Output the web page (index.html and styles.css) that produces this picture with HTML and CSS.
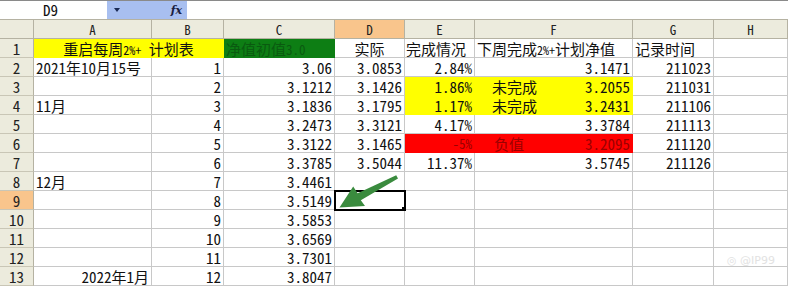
FILE: index.html
```html
<!DOCTYPE html>
<html>
<head>
<meta charset="utf-8">
<link rel="stylesheet" href="styles.css">
</head>
<body>
<div class="app">
  <div class="fbar">
    <div class="namebox">D9</div>
    <div class="fbtn"><span class="dd"></span><span class="fx">fx</span></div>
    <div class="finput"></div>
  </div>
  <div class="sheet">
    <div class="c hd corner"></div>
    <div class="c hd">A</div><div class="c hd">B</div><div class="c hd">C</div><div class="c hd sel">D</div><div class="c hd">E</div><div class="c hd">F</div><div class="c hd">G</div><div class="c hd">H</div>

    <div class="c rh">1</div>
    <div class="c yel span2 ctr">重启每周<span class="sm">2%+</span> 计划表</div>
    <div class="c grn">净值初值<span class="md">3.0</span></div>
    <div class="c ctr">实际</div>
    <div class="c tight">完成情况</div>
    <div class="c">下周完成<span class="sm">2%+</span>计划净值</div>
    <div class="c">记录时间</div>
    <div class="c"></div>

    <div class="c rh">2</div>
    <div class="c">2021年10月15号</div><div class="c r">1</div><div class="c r">3.06</div><div class="c r">3.0853</div><div class="c r">2.84%</div><div class="c r">3.1471</div><div class="c r">211023</div><div class="c"></div>

    <div class="c rh">3</div>
    <div class="c"></div><div class="c r">2</div><div class="c r">3.1212</div><div class="c r">3.1426</div><div class="c r yel">1.86%</div><div class="c yel split"><span>未完成</span><span>3.2055</span></div><div class="c r">211031</div><div class="c"></div>

    <div class="c rh">4</div>
    <div class="c">11月</div><div class="c r">3</div><div class="c r">3.1836</div><div class="c r">3.1795</div><div class="c r yel">1.17%</div><div class="c yel split"><span>未完成</span><span>3.2431</span></div><div class="c r">211106</div><div class="c"></div>

    <div class="c rh">5</div>
    <div class="c"></div><div class="c r">4</div><div class="c r">3.2473</div><div class="c r">3.3121</div><div class="c r">4.17%</div><div class="c r">3.3784</div><div class="c r">211113</div><div class="c"></div>

    <div class="c rh">6</div>
    <div class="c"></div><div class="c r">5</div><div class="c r">3.3122</div><div class="c r">3.1465</div><div class="c r red smcell">-5%</div><div class="c red split neg"><span>负值</span><span>3.2095</span></div><div class="c r">211120</div><div class="c"></div>

    <div class="c rh">7</div>
    <div class="c"></div><div class="c r">6</div><div class="c r">3.3785</div><div class="c r">3.5044</div><div class="c r">11.37%</div><div class="c r">3.5745</div><div class="c r">211126</div><div class="c"></div>

    <div class="c rh">8</div>
    <div class="c">12月</div><div class="c r">7</div><div class="c r">3.4461</div><div class="c"></div><div class="c"></div><div class="c"></div><div class="c"></div><div class="c"></div>

    <div class="c rh sel">9</div>
    <div class="c"></div><div class="c r">8</div><div class="c r">3.5149</div><div class="c active"></div><div class="c"></div><div class="c"></div><div class="c"></div><div class="c"></div>

    <div class="c rh">10</div>
    <div class="c"></div><div class="c r">9</div><div class="c r">3.5853</div><div class="c"></div><div class="c"></div><div class="c"></div><div class="c"></div><div class="c"></div>

    <div class="c rh">11</div>
    <div class="c"></div><div class="c r">10</div><div class="c r">3.6569</div><div class="c"></div><div class="c"></div><div class="c"></div><div class="c"></div><div class="c"></div>

    <div class="c rh">12</div>
    <div class="c"></div><div class="c r">11</div><div class="c r">3.7301</div><div class="c"></div><div class="c"></div><div class="c"></div><div class="c"></div><div class="c"></div>

    <div class="c rh">13</div>
    <div class="c r">2022年1月</div><div class="c r">12</div><div class="c r">3.8047</div><div class="c"></div><div class="c"></div><div class="c"></div><div class="c"></div><div class="c"></div>
  </div>
  <svg class="arrow" width="788" height="288" viewBox="0 0 788 288">
    <polygon points="396.2,175.2 357.6,193.2 353.2,186.6 339.5,207.5 365,206 360.8,200.2 398,178.6" fill="#3a8b3e"/>
  </svg>
  <div class="wm">◎ @IP99</div>
</div>
</body>
</html>
```
FILE: styles.css
```css
html, body {
  margin: 0;
  padding: 0;
  background: #ffffff;
}
.app {
  position: relative;
  width: 788px;
  height: 288px;
  overflow: hidden;
  font-family: "Noto Sans Mono CJK SC", "Noto Sans CJK SC", monospace;
  font-size: 15px;
  color: #111;
}
.fbar {
  display: flex;
  height: 19px;
  border-top: 1px solid #8a8a8a;
  box-sizing: border-box;
  background: #fff;
}
.namebox {
  width: 107px;
  padding-left: 43px;
  box-sizing: border-box;
  line-height: 18px;
  font-size: 15px;
}
.fbtn {
  width: 80px;
  background: #a8bff0;
  display: flex;
  align-items: center;
  justify-content: space-between;
  padding: 0 5px 0 7px;
  box-sizing: border-box;
}
.dd {
  width: 0;
  height: 0;
  border-left: 3px solid transparent;
  border-right: 3px solid transparent;
  border-top: 4px solid #1a2a55;
}
.fx {
  font-family: "DejaVu Serif", serif;
  font-style: italic;
  font-weight: bold;
  font-size: 11px;
  color: #1a2040;
}
.finput {
  flex: 1;
}
.sheet {
  display: grid;
  grid-template-columns: 34px 118px 72px 111px 70px 70px 158px 81px 74px;
  grid-auto-rows: 19px;
  border-top: 1px solid #b5b2a2;
}
.c {
  box-sizing: border-box;
  border-right: 1px solid #c8c8c8;
  border-bottom: 1px solid #c8c8c8;
  padding: 0 2px;
  line-height: 19px;
  white-space: nowrap;
  overflow: hidden;
}
.hd {
  background: #ecebdd;
  border-right-color: #b5b2a2;
  border-bottom-color: #b5b2a2;
  text-align: center;
  font-size: 13px;
  line-height: 20px;
  color: #222;
}
.rh {
  background: #ecebdd;
  border-right-color: #b5b2a2;
  border-bottom-color: #c9c6b6;
  text-align: center;
  font-size: 15px;
  color: #222;
}
.sel {
  background: #f9c58c;
}
.r {
  text-align: right;
}
.ctr {
  text-align: center;
}
.tight {
  padding: 0 0 0 1px;
}
.span2 {
  grid-column: span 2;
}
.sm {
  font-size: 12px;
}
.md {
  font-size: 13px;
}
.smcell {
  font-size: 13px;
  line-height: 19px;
}
.yel {
  background: #ffff00;
  border-color: #ffff00;
}
.grn {
  background: #0d7e14;
  border-color: #0d7e14;
  color: #0a5a10;
}
.red {
  background: #ff0000;
  border-color: #ff0000;
  color: #9a0000;
}
.split {
  display: flex;
  justify-content: space-between;
  padding-left: 17px;
}
.neg {
  padding-left: 19px;
}
.active {
  position: relative;
  outline: 2px solid #000;
  outline-offset: -1px;
}
.active::after {
  content: "";
  position: absolute;
  right: -3px;
  bottom: -3px;
  width: 5px;
  height: 5px;
  background: #000;
}
.arrow {
  position: absolute;
  left: 0;
  top: 0;
  pointer-events: none;
}
.wm {
  position: absolute;
  left: 727px;
  top: 254px;
  font-family: "DejaVu Sans", sans-serif;
  font-size: 11px;
  color: #e2e2e2;
}
```
